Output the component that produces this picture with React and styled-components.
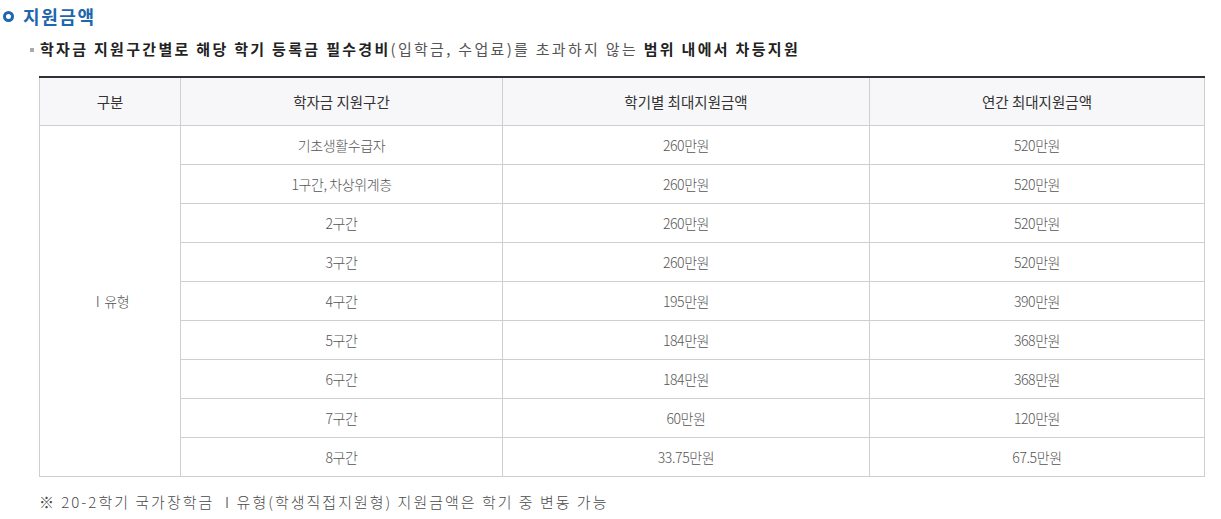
import React from 'react';
import styled, { createGlobalStyle } from 'styled-components';

const GlobalStyle = createGlobalStyle`
  body {
    margin: 0;
    background: #fff;
    font-family: "Noto Sans CJK KR", "Noto Sans", sans-serif;
  }
`;

const Page = styled.div`
  padding: 4px 18px 0 3px;
`;

const Title = styled.h3`
  display: flex;
  align-items: center;
  gap: 9px;
  margin: 0;
  height: 24px;
  font-size: 18px;
  font-weight: 700;
  color: #1e66ae;
  letter-spacing: 1.6px;
`;

const Ring = styled.span`
  width: 11px;
  height: 11px;
  box-sizing: border-box;
  border: 3px solid #1e66ae;
  border-radius: 50%;
`;

const Desc = styled.p`
  display: flex;
  align-items: center;
  margin: 10px 0 0 27px;
  font-size: 15px;
  color: #555;
  letter-spacing: 2.3px;

  &::before {
    content: '';
    flex: none;
    width: 4px;
    height: 4px;
    background: #aaa;
    margin-right: 6px;
    margin-top: 3px;
  }

  b {
    color: #222;
    font-weight: 700;
  }
`;

const Table = styled.table`
  margin: 17px 0 0 36px;
  width: 1165px;
  border-collapse: collapse;
  table-layout: fixed;
  border-top: 2px solid #2e3136;
  font-size: 14px;
  color: #555;
  letter-spacing: -0.4px;
`;

const Col = styled.col`
  width: ${(p) => p.$w}px;
`;

const Th = styled.th`
  height: 47px;
  padding: 0;
  border: 1px solid #cfcfcf;
  border-top: none;
  background: #f7f7f9;
  color: #333;
  font-size: 14.5px;
  font-weight: 400;
  letter-spacing: 0;
  text-align: center;
`;

const Td = styled.td`
  height: 38px;
  padding: 0;
  border: 1px solid #cfcfcf;
  font-weight: 300;
  text-align: center;
`;

const Note = styled.p`
  margin: 14px 0 0 36px;
  font-size: 15px;
  font-weight: 300;
  color: #4a4a4a;
  letter-spacing: 2px;
`;

const cols = [141, 322, 367, 335];
const heads = ['구분', '학자금 지원구간', '학기별 최대지원금액', '연간 최대지원금액'];

const rows = [
  ['기초생활수급자', '260만원', '520만원'],
  ['1구간, 차상위계층', '260만원', '520만원'],
  ['2구간', '260만원', '520만원'],
  ['3구간', '260만원', '520만원'],
  ['4구간', '195만원', '390만원'],
  ['5구간', '184만원', '368만원'],
  ['6구간', '184만원', '368만원'],
  ['7구간', '60만원', '120만원'],
  ['8구간', '33.75만원', '67.5만원'],
];

const App = () => (
  <Page>
    <GlobalStyle />
    <Title>
      <Ring />
      지원금액
    </Title>
    <Desc>
      <span>
        <b>학자금 지원구간별로 해당 학기 등록금 필수경비</b>(입학금, 수업료)를 초과하지 않는 <b>범위 내에서 차등지원</b>
      </span>
    </Desc>
    <Table>
      <colgroup>
        {cols.map((w, i) => <Col key={i} $w={w} />)}
      </colgroup>
      <thead>
        <tr>
          {heads.map((h) => <Th key={h}>{h}</Th>)}
        </tr>
      </thead>
      <tbody>
        {rows.map((r, i) => (
          <tr key={r[0]}>
            {i === 0 && <Td rowSpan={rows.length}>Ⅰ유형</Td>}
            <Td>{r[0]}</Td>
            <Td>{r[1]}</Td>
            <Td>{r[2]}</Td>
          </tr>
        ))}
      </tbody>
    </Table>
    <Note>※ 20-2학기 국가장학금 Ⅰ유형(학생직접지원형) 지원금액은 학기 중 변동 가능</Note>
  </Page>
);

export default App;
